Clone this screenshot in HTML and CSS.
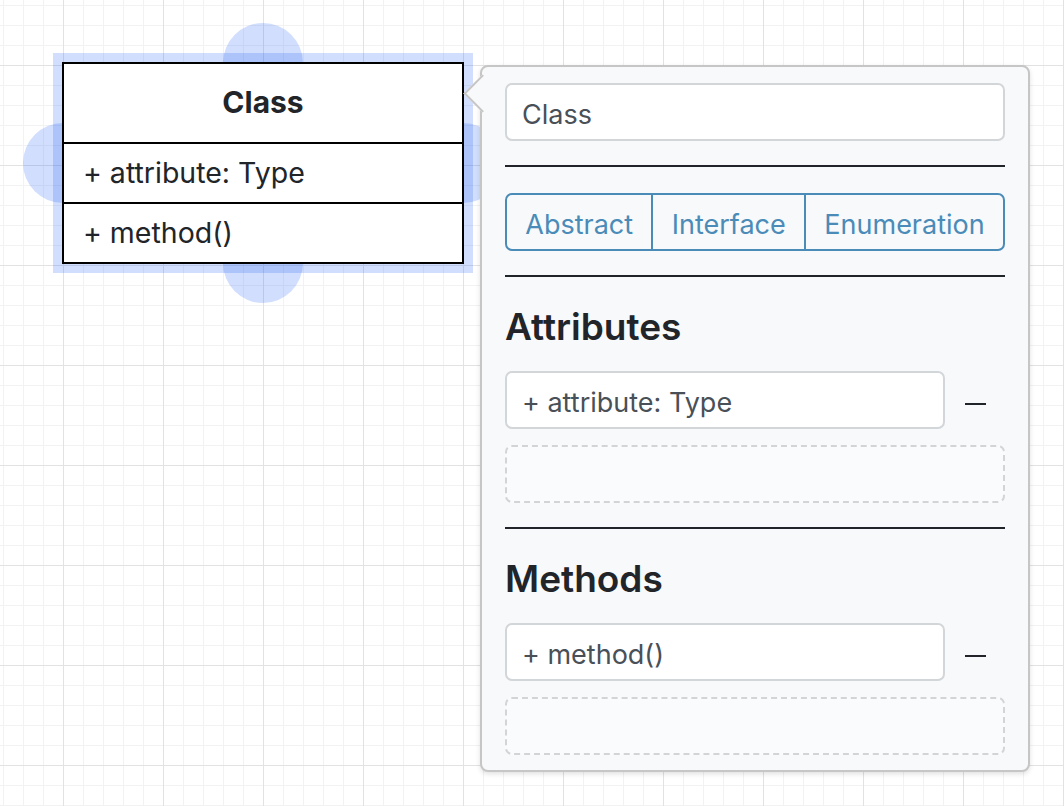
FILE: index.html
```html
<!DOCTYPE html>
<html lang="en">
<head>
<meta charset="utf-8">
<title>Class editor</title>
<link rel="stylesheet" href="styles.css">
</head>
<body>
<div class="canvas">
  <svg class="diagram" width="520" height="320" viewBox="0 0 520 320">
    <g class="selection">
      <circle cx="263" cy="63" r="40"/>
      <circle cx="63" cy="163" r="40"/>
      <circle cx="463" cy="163" r="40"/>
      <circle cx="263" cy="263" r="40"/>
      <rect x="53" y="53" width="420" height="220"/>
    </g>
    <rect class="uml-box" x="63" y="63" width="400" height="200"/>
    <line class="uml-sep" x1="63" y1="143" x2="463" y2="143"/>
    <line class="uml-sep" x1="63" y1="203" x2="463" y2="203"/>
    <text class="uml-text uml-title" x="263" y="113" text-anchor="middle">Class</text>
    <text class="uml-text" x="83" y="183">+ attribute: Type</text>
    <text class="uml-text" x="83" y="243">+ method()</text>
  </svg>

  <div class="popover">
    <div class="popover-arrow"></div>
    <input class="field" type="text" value="Class">
    <div class="divider"></div>
    <div class="btn-group">
      <button class="btn" type="button">Abstract</button>
      <button class="btn" type="button">Interface</button>
      <button class="btn" type="button">Enumeration</button>
    </div>
    <div class="divider"></div>
    <h3 class="section-title">Attributes</h3>
    <div class="entry-row">
      <input class="field" type="text" value="+ attribute: Type">
      <button class="remove" type="button" aria-label="Remove"><svg width="21" height="2" viewBox="0 0 21 2"><rect width="21" height="2" fill="#212529"/></svg></button>
    </div>
    <div class="new-entry"></div>
    <div class="divider"></div>
    <h3 class="section-title">Methods</h3>
    <div class="entry-row">
      <input class="field" type="text" value="+ method()">
      <button class="remove" type="button" aria-label="Remove"><svg width="21" height="2" viewBox="0 0 21 2"><rect width="21" height="2" fill="#212529"/></svg></button>
    </div>
    <div class="new-entry"></div>
  </div>
</div>
</body>
</html>
```

FILE: styles.css
```css
html, body {
  margin: 0;
  padding: 0;
  width: 1064px;
  height: 806px;
  overflow: hidden;
  font-family: Inter, "Noto Sans", sans-serif;
}

.canvas {
  position: relative;
  width: 1064px;
  height: 806px;
  background-color: #ffffff;
  background-image:
    linear-gradient(to right, #e2e2e2 1px, transparent 1px),
    linear-gradient(to bottom, #e2e2e2 1px, transparent 1px),
    linear-gradient(to right, #f2f2f2 1px, transparent 1px),
    linear-gradient(to bottom, #f2f2f2 1px, transparent 1px);
  background-size: 100px 100px, 100px 100px, 20px 20px, 20px 20px;
  background-position: 63px 65px, 63px 65px, 3px 5px, 3px 5px;
}

.diagram {
  position: absolute;
  left: 0;
  top: 0;
}

.selection {
  fill: rgba(45, 105, 245, 0.22);
}

.uml-box {
  fill: #ffffff;
  stroke: #000000;
  stroke-width: 2;
}

.uml-sep {
  stroke: #000000;
  stroke-width: 2;
}

.uml-text {
  font-family: Inter, sans-serif;
  font-size: 28.5px;
  fill: #212529;
}

.uml-title {
  font-size: 30px;
  font-weight: 700;
}

.popover {
  position: absolute;
  left: 480px;
  top: 65px;
  width: 550px;
  box-sizing: border-box;
  padding: 16px 23px 15px;
  background: #f8f9fa;
  border: 2px solid #c6c6c6;
  border-radius: 8px;
  box-shadow: 0 2px 5px rgba(0, 0, 0, 0.12);
}

.popover-arrow {
  position: absolute;
  left: -13px;
  top: 13px;
  width: 25px;
  height: 25px;
  background: #f8f9fa;
  border-left: 2px solid #c6c6c6;
  border-bottom: 2px solid #c6c6c6;
  transform: rotate(45deg);
}

.field {
  display: block;
  width: 100%;
  height: 58px;
  box-sizing: border-box;
  margin: 0;
  padding: 4px 15px 0;
  border: 2px solid #d3d6d9;
  border-radius: 7px;
  background: #ffffff;
  font-family: Inter, sans-serif;
  font-size: 27px;
  color: #495057;
  outline: none;
}

.divider {
  height: 2px;
  background: #212529;
  margin: 24px 0 26px;
}

.btn-group {
  display: flex;
  height: 58px;
}

.btn {
  flex: 1 1 auto;
  margin: 0;
  padding: 4px 12px 0;
  border: 2px solid #4a8bb8;
  background: transparent;
  color: #4a8bb8;
  font-family: Inter, sans-serif;
  font-size: 27px;
  border-radius: 0;
}

.btn + .btn {
  margin-left: -2px;
}

.btn:first-child {
  border-radius: 7px 0 0 7px;
}

.btn:last-child {
  border-radius: 0 7px 7px 0;
}

.section-title {
  margin: 28px 0 22px;
  font-size: 37px;
  line-height: 44px;
  font-weight: 600;
  color: #212529;
}

.entry-row {
  display: flex;
  height: 58px;
}

.entry-row .field {
  flex: 1 1 0;
  width: 0;
  min-width: 0;
}

.remove {
  flex: 0 0 60px;
  height: 58px;
  margin: 0;
  padding: 32px 0 0;
  border: 0;
  background: transparent;
  display: flex;
  justify-content: center;
  align-items: flex-start;
}

.remove svg {
  display: block;
}

.new-entry {
  height: 58px;
  box-sizing: border-box;
  margin-top: 16px;
  border: 2px dashed #d2d4d6;
  border-radius: 7px;
  background: #fafbfc;
}
```
